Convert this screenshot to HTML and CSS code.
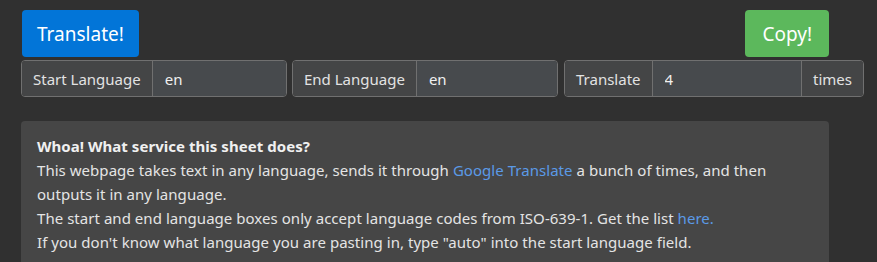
FILE: index.html
```
<!DOCTYPE html>
<html lang="en">
<head>
    <meta charset="UTF-8">
    <title>Translate Chain</title>
    <link rel="stylesheet" href="styles.css">
</head>
<body>
    <div class="page">
        <div class="actions">
            <button class="btn primary">Translate!</button>
            <button class="btn success">Copy!</button>
        </div>
        <div class="fields">
            <div class="group g-start">
                <span class="addon">Start Language</span>
                <input type="text" class="field" value="en">
            </div>
            <div class="group g-end">
                <span class="addon">End Language</span>
                <input type="text" class="field" value="en">
            </div>
            <div class="group g-count">
                <span class="addon">Translate</span>
                <input type="text" class="field" value="4">
                <span class="addon">times</span>
            </div>
        </div>
        <div class="info">
            <strong>Whoa! What service this sheet does?</strong><br>
            This webpage takes text in any language, sends it through <a href="#">Google Translate</a> a bunch of times, and then outputs it in any language.<br>
            The start and end language boxes only accept language codes from ISO-639-1. Get the list <a href="#">here.</a><br>
            If you don't know what language you are pasting in, type "auto" into the start language field.
        </div>
    </div>
</body>
</html>
```

FILE: styles.css
```
* {
    margin: 0;
    padding: 0;
    box-sizing: border-box;
}

body {
    font-family: "Noto Sans", "Open Sans", sans-serif;
    font-size: 15px;
    line-height: 24px;
    background-color: #303030;
    color: #e6e6e6;
    overflow: hidden;
}

.page {
    padding: 10px 0 0 21px;
}

.actions {
    width: 808px;
    display: flex;
    justify-content: space-between;
}

.btn {
    height: 47px;
    padding: 0 17px;
    font-family: inherit;
    font-size: 19px;
    color: #fff;
    border: none;
    border-radius: 4px;
}

.btn.primary {
    margin-left: 1px;
    padding: 0 15px;
    background-color: #0275d8;
}

.btn.success {
    background-color: #5cb85c;
}

.fields {
    display: flex;
    gap: 5px;
    margin-top: 3px;
}

.group {
    display: flex;
    height: 37px;
    border: 1px solid #707070;
    border-radius: 4px;
    overflow: hidden;
}

.g-start { width: 266px; }
.g-end { width: 266px; }
.g-count { width: 300px; margin-left: 1px; }

.addon {
    display: flex;
    align-items: center;
    padding: 0 11px;
    background-color: #444546;
    color: #e2e2e2;
    white-space: nowrap;
}

.addon + .field,
.field + .addon {
    border-left: 1px solid #707070;
}

.field {
    flex: 1;
    min-width: 0;
    padding: 0 12px;
    font-family: inherit;
    font-size: 15px;
    color: #f0f0f0;
    background-color: #474a4d;
    border: none;
    outline: none;
}

.info {
    width: 808px;
    margin-top: 24px;
    padding: 13px 16px 20px;
    letter-spacing: 0.04px;
    background-color: #464646;
    border-radius: 4px;
    color: #e4e4e4;
}

.info strong {
    color: #f0f0f0;
}

.info a {
    color: #5b9ae6;
    text-decoration: none;
}
```
